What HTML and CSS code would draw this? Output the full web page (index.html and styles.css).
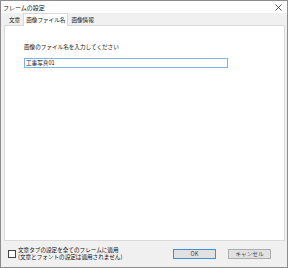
FILE: index.html
```html
<!DOCTYPE html>
<html lang="ja">
<head>
  <meta charset="UTF-8">
  <title>フレームの設定</title>
  <link rel="stylesheet" href="styles.css">
</head>
<body>
  <div class="window">
    <div class="titlebar">
      <span class="title">フレームの設定</span>
      <svg class="close" width="7" height="7" viewBox="0 0 7 7"><path d="M0.5 0.5L6.5 6.5M6.5 0.5L0.5 6.5" stroke="#333" stroke-width="0.8"/></svg>
    </div>
    <div class="content">
      <div class="tabs">
        <div class="tab">文章</div>
        <div class="tab active">画像ファイル名</div>
        <div class="tab">画像情報</div>
      </div>
      <div class="panel">
        <div class="label">画像のファイル名を入力してください</div>
        <input class="field" type="text" value="工事写真01">
      </div>
      <div class="footer">
        <label class="check">
          <span class="box"></span>
          <span class="check-text">文章タブの設定を全てのフレームに適用<br>(文章とフォントの設定は適用されません)</span>
        </label>
        <div class="buttons">
          <button class="btn default">OK</button>
          <button class="btn">キャンセル</button>
        </div>
      </div>
    </div>
  </div>
</body>
</html>
```

FILE: styles.css
```css
body {
  margin: 0;
  font-family: "Noto Sans CJK JP", "Noto Sans", sans-serif;
  font-size: 5.6px;
  color: #111;
}
.window {
  width: 288px;
  height: 268px;
  box-sizing: border-box;
  border: 1px solid #8c8c8c;
  display: flex;
  flex-direction: column;
  background-color: #f0f0f0;
}
.titlebar {
  height: 12px;
  background-color: white;
  display: flex;
  align-items: center;
  justify-content: space-between;
  padding: 0 5px 0 2px;
}
.title {
  font-size: 6px;
}
.content {
  flex: 1;
  display: flex;
  flex-direction: column;
  padding: 0 2px 0 3px;
}
.tabs {
  display: flex;
  align-items: flex-end;
  height: 12px;
  padding-left: 2px;
}
.tab {
  height: 10px;
  line-height: 10px;
  padding: 0 2px;
  border: 1px solid transparent;
  border-bottom: none;
}
.tab.active {
  height: 12px;
  line-height: 12px;
  background-color: white;
  border-color: #d9d9d9;
  margin-bottom: -1px;
  position: relative;
}
.panel {
  height: 216px;
  box-sizing: border-box;
  background-color: white;
  border: 1px solid #d9d9d9;
  padding: 17px 20px 0 19px;
}
.label {
  line-height: 8px;
  margin-bottom: 7px;
}
.field {
  display: block;
  width: 204px;
  height: 10px;
  box-sizing: border-box;
  margin: 0;
  padding: 0 1px;
  border: 1px solid #7eb4ea;
  font-family: inherit;
  font-size: 5.6px;
  color: #111;
  outline: none;
}
.footer {
  flex: 1;
  display: flex;
  align-items: center;
  justify-content: space-between;
  padding: 0 14px 0 4px;
}
.check {
  display: flex;
  align-items: center;
  gap: 2px;
}
.box {
  width: 6px;
  height: 6px;
  border: 1px solid #444;
  background-color: white;
}
.check-text {
  line-height: 7px;
}
.buttons {
  display: flex;
  gap: 12px;
}
.btn {
  width: 43px;
  height: 10px;
  padding: 0;
  border: 1px solid #adadad;
  background-color: #e1e1e1;
  font-family: inherit;
  font-size: 5.6px;
  color: #444;
}
.btn.default {
  border-color: #3c8fdb;
}
```
